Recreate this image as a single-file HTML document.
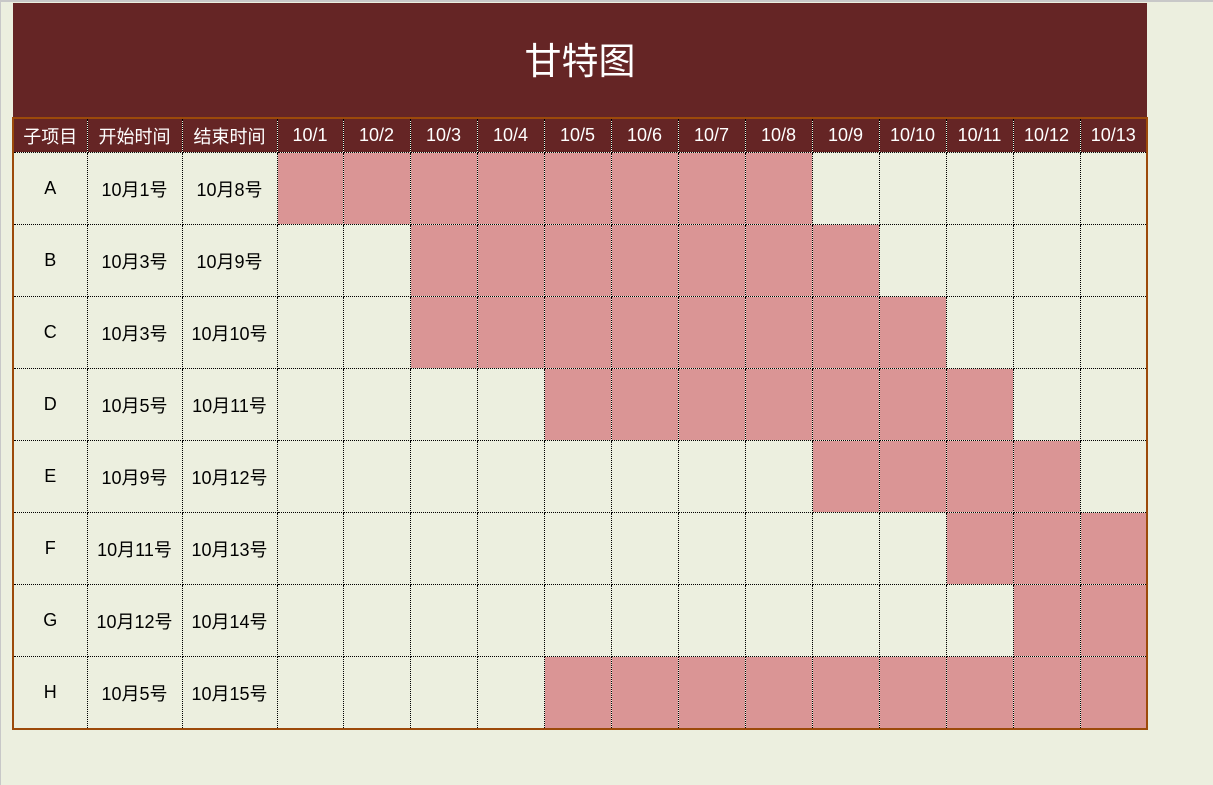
<!DOCTYPE html>
<html><head><meta charset="utf-8"><style>
body{margin:0;width:1213px;height:785px;background:#ecefdf;position:relative;overflow:hidden;font-family:"Liberation Sans","Noto Sans CJK SC",sans-serif}
.top{position:absolute;left:0;top:0;width:1213px;height:2px;background:#c8c8c8}
.lft{position:absolute;left:0;top:0;width:1px;height:785px;background:#c8c8c8}
.title{position:absolute;left:13px;top:3px;width:1134px;height:115px;background:#652525;color:#fff;font-size:37px;text-align:center;line-height:118px}
table{position:absolute;left:12px;top:117px;border-collapse:collapse;table-layout:fixed;width:1136px;border:2px solid #9c4a0a}
td{border:1px dotted #000;padding:0;text-align:center;font-size:18px;color:#000;background:#ecefdf;overflow:hidden;white-space:nowrap}
tr.h td{background:#652525;color:#fff;height:33px;font-size:18px;border-top:none}
tr.r td{height:71px}
td.p{background:#da9595}
</style></head><body>
<div class="top"></div><div class="lft"></div>
<div class="title">甘特图</div>
<table>
<colgroup><col style="width:74px"><col style="width:95px"><col style="width:95px"><col style="width:66px"><col style="width:67px"><col style="width:67px"><col style="width:67px"><col style="width:67px"><col style="width:67px"><col style="width:67px"><col style="width:67px"><col style="width:67px"><col style="width:67px"><col style="width:67px"><col style="width:67px"><col style="width:67px"></colgroup>
<tr class="h"><td>子项目</td><td>开始时间</td><td>结束时间</td><td>10/1</td><td>10/2</td><td>10/3</td><td>10/4</td><td>10/5</td><td>10/6</td><td>10/7</td><td>10/8</td><td>10/9</td><td>10/10</td><td>10/11</td><td>10/12</td><td>10/13</td></tr>
<tr class="r"><td>A</td><td>10月1号</td><td>10月8号</td><td class="p"></td><td class="p"></td><td class="p"></td><td class="p"></td><td class="p"></td><td class="p"></td><td class="p"></td><td class="p"></td><td></td><td></td><td></td><td></td><td></td></tr>
<tr class="r"><td>B</td><td>10月3号</td><td>10月9号</td><td></td><td></td><td class="p"></td><td class="p"></td><td class="p"></td><td class="p"></td><td class="p"></td><td class="p"></td><td class="p"></td><td></td><td></td><td></td><td></td></tr>
<tr class="r"><td>C</td><td>10月3号</td><td>10月10号</td><td></td><td></td><td class="p"></td><td class="p"></td><td class="p"></td><td class="p"></td><td class="p"></td><td class="p"></td><td class="p"></td><td class="p"></td><td></td><td></td><td></td></tr>
<tr class="r"><td>D</td><td>10月5号</td><td>10月11号</td><td></td><td></td><td></td><td></td><td class="p"></td><td class="p"></td><td class="p"></td><td class="p"></td><td class="p"></td><td class="p"></td><td class="p"></td><td></td><td></td></tr>
<tr class="r"><td>E</td><td>10月9号</td><td>10月12号</td><td></td><td></td><td></td><td></td><td></td><td></td><td></td><td></td><td class="p"></td><td class="p"></td><td class="p"></td><td class="p"></td><td></td></tr>
<tr class="r"><td>F</td><td>10月11号</td><td>10月13号</td><td></td><td></td><td></td><td></td><td></td><td></td><td></td><td></td><td></td><td></td><td class="p"></td><td class="p"></td><td class="p"></td></tr>
<tr class="r"><td>G</td><td>10月12号</td><td>10月14号</td><td></td><td></td><td></td><td></td><td></td><td></td><td></td><td></td><td></td><td></td><td></td><td class="p"></td><td class="p"></td></tr>
<tr class="r"><td>H</td><td>10月5号</td><td>10月15号</td><td></td><td></td><td></td><td></td><td class="p"></td><td class="p"></td><td class="p"></td><td class="p"></td><td class="p"></td><td class="p"></td><td class="p"></td><td class="p"></td><td class="p"></td></tr>
</table>
</body></html>
